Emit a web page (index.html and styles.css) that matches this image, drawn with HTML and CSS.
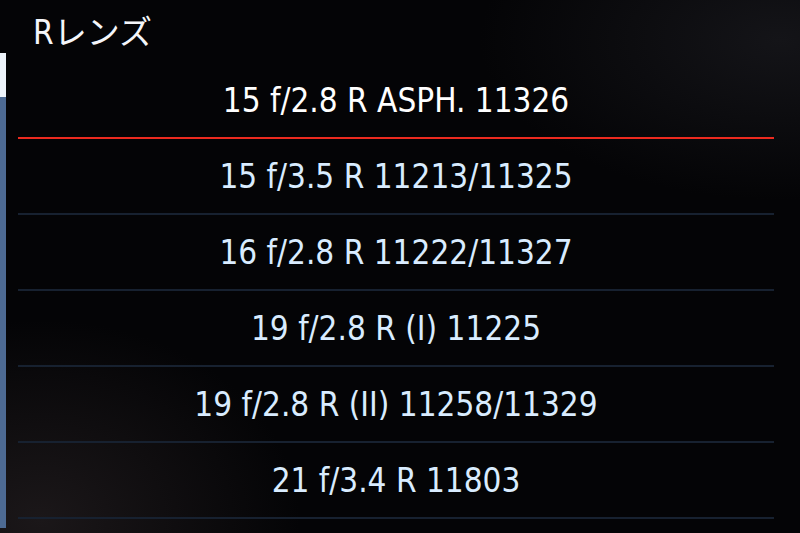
FILE: index.html
```html
<!DOCTYPE html>
<html lang="ja">
<head>
<meta charset="utf-8">
<title>Rレンズ</title>
<link rel="stylesheet" href="styles.css">
</head>
<body>
<div class="screen">
  <div class="scrollbar">
    <div class="scroll-gap"></div>
    <div class="scroll-thumb"></div>
    <div class="scroll-track"></div>
  </div>
  <div class="panel">
    <header class="title">Rレンズ</header>
    <ul class="lens-list">
      <li class="lens selected">15 f/2.8 R ASPH. 11326</li>
      <li class="lens">15 f/3.5 R 11213/11325</li>
      <li class="lens">16 f/2.8 R 11222/11327</li>
      <li class="lens">19 f/2.8 R (I) 11225</li>
      <li class="lens">19 f/2.8 R (II) 11258/11329</li>
      <li class="lens">21 f/3.4 R 11803</li>
    </ul>
  </div>
</div>
</body>
</html>
```

FILE: styles.css
```css
html, body {
  margin: 0;
  height: 100%;
  background: #040406;
}

.screen {
  width: 800px;
  height: 533px;
  display: flex;
  overflow: hidden;
  background:
    radial-gradient(ellipse 260px 200px at 40px 520px, #1b1719 0%, rgba(27,23,25,0) 100%),
    radial-gradient(ellipse 300px 160px at 780px 40px, #141418 0%, rgba(20,20,24,0) 100%),
    #040406;
  font-family: "DejaVu Sans Condensed", "DejaVu Sans", "Noto Sans CJK JP", sans-serif;
}

.scrollbar {
  width: 6px;
  display: flex;
  flex-direction: column;
}

.scroll-gap { height: 53px; }

.scroll-thumb {
  height: 44px;
  background: #eef4fb;
}

.scroll-track {
  height: 431px;
  background: #4d6a93;
}

.panel {
  flex: 1;
  padding: 0 26px 0 12px;
  display: flex;
  flex-direction: column;
}

.title {
  height: 63px;
  box-sizing: border-box;
  padding: 13px 0 0 15px;
  color: #f4f6fa;
  font-size: 33px;
  line-height: 40px;
  font-family: "DejaVu Sans Condensed", "Noto Sans CJK JP", sans-serif;
}

.lens-list {
  list-style: none;
  margin: 0;
  padding: 0;
}

.lens {
  height: 74px;
  border-bottom: 2px solid #172130;
  display: flex;
  align-items: center;
  justify-content: center;
  color: #d9ecff;
  font-size: 33px;
}

.lens.selected {
  color: #ffffff;
  border-bottom-color: #ec2a1f;
}
```
